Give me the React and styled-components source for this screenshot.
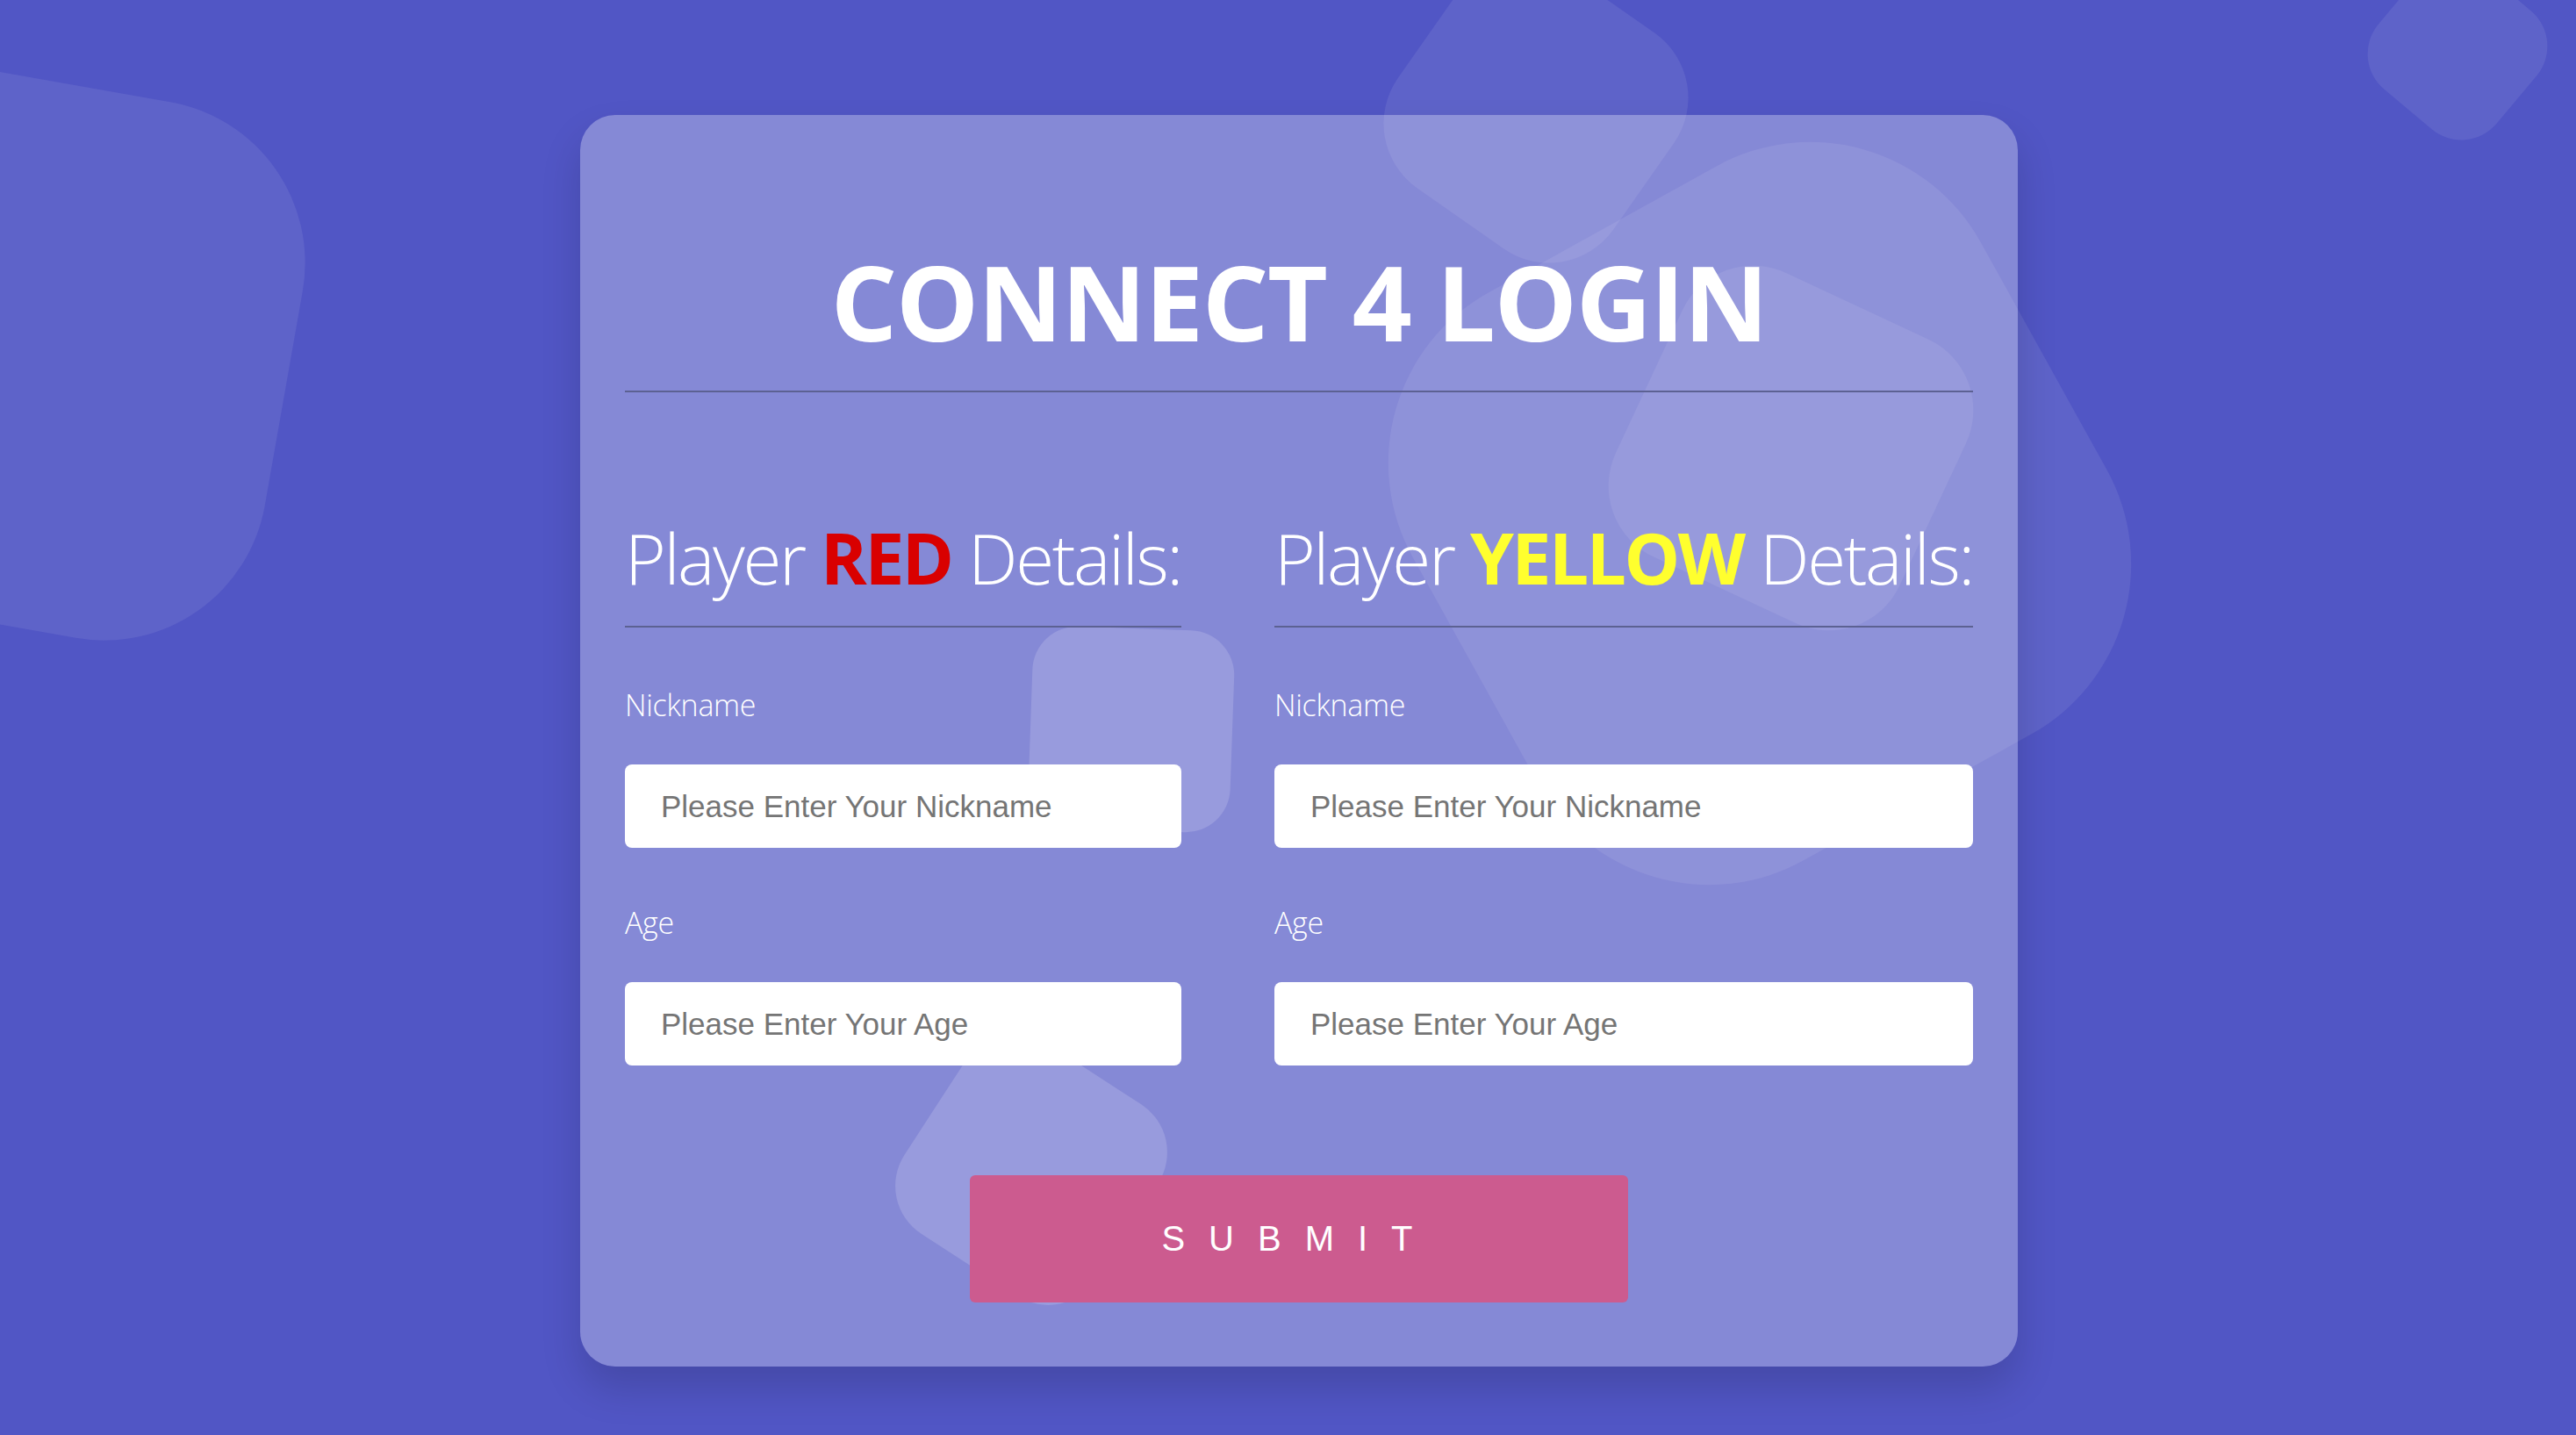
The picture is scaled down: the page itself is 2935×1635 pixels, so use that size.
import React from "react";
import styled, { createGlobalStyle } from "styled-components";

const GlobalStyle = createGlobalStyle`
  html, body {
    margin: 0;
    padding: 0;
    background: #5156c5;
  }

  * {
    box-sizing: border-box;
  }
`;

const Page = styled.div`
  position: relative;
  height: 100vh;
  overflow: hidden;
  display: flex;
  justify-content: center;
  align-items: flex-start;
  padding: 131px 0 0 25px;
  background: #5156c5;
`;

const Backdrop = styled.div`
  position: absolute;
  inset: 0;
  z-index: 0;
`;

const Shape = styled.span`
  position: absolute;
  left: ${(p) => p.x - p.size / 2}px;
  top: ${(p) => p.y - p.size / 2}px;
  width: ${(p) => p.size}px;
  height: ${(p) => p.size}px;
  border-radius: ${(p) => p.radius || 30}%;
  background: rgba(255, 255, 255, ${(p) => p.alpha || 0.08});
  transform: rotate(${(p) => p.rot}deg);
`;

const Card = styled.form`
  position: relative;
  z-index: 1;
  width: 1638px;
  padding: 153px 51px 73px;
  border-radius: 40px;
  background: rgba(255, 255, 255, 0.3);
  box-shadow: 0 25px 45px rgba(0, 0, 0, 0.15);
  font-family: "Open Sans", "Noto Sans", sans-serif;
  color: #fff;
`;

const Title = styled.h1`
  margin: 0;
  padding-bottom: 42px;
  border-bottom: 2px solid #5c6192;
  text-align: center;
  font-size: 119px;
  font-weight: 700;
  line-height: 1;
  letter-spacing: -1.5px;
`;

const Players = styled.div`
  display: flex;
  justify-content: space-between;
  margin-top: 148px;
`;

const Column = styled.div`
  display: flex;
  flex-direction: column;
`;

const Heading = styled.h2`
  margin: 0;
  padding-bottom: 38px;
  border-bottom: 2px solid #5c6192;
  font-size: 80px;
  font-weight: 300;
  line-height: 1;
  letter-spacing: -2.4px;
  white-space: nowrap;
`;

const Accent = styled.span`
  font-weight: 700;
  color: ${(p) => p.color};
`;

const Label = styled.label`
  display: block;
  margin-top: ${(p) => p.top}px;
  font-size: 34px;
  font-weight: 300;
  line-height: 1;
  letter-spacing: -0.3px;
`;

const Input = styled.input`
  display: block;
  width: 100%;
  height: 95px;
  margin-top: 51px;
  padding: 0 41px;
  border: none;
  border-radius: 8px;
  background: #fff;
  font-family: "Liberation Sans", Arial, sans-serif;
  font-size: 35px;
  color: #333;
  outline: none;

  &::placeholder {
    color: #757575;
  }
`;

const Submit = styled.button`
  display: block;
  width: 750px;
  height: 145px;
  margin: 125px auto 0;
  border: none;
  border-radius: 6px;
  background: #cc5b8f;
  color: #fff;
  font-family: "Liberation Sans", Arial, sans-serif;
  font-size: 40px;
  letter-spacing: 27px;
  cursor: pointer;
`;

const shapes = [
  { x: 18, y: 400, size: 620, rot: 10 },
  { x: 1750, y: 126, size: 300, rot: 35 },
  { x: 2005, y: 585, size: 740, rot: -29 },
  { x: 2040, y: 510, size: 357, rot: 25, radius: 25 },
  { x: 2800, y: 57, size: 176, rot: 40 },
  { x: 1289, y: 831, size: 230, rot: 2, radius: 22, alpha: 0.155 },
  { x: 1175, y: 1332, size: 260, rot: 33, radius: 25, alpha: 0.155 },
];

const players = [
  { name: "RED", color: "#d90000" },
  { name: "YELLOW", color: "#ffff2e" },
];

function PlayerForm({ name, color }) {
  return (
    <Column>
      <Heading>
        Player <Accent color={color}>{name}</Accent> Details:
      </Heading>
      <Label top={71}>Nickname</Label>
      <Input type="text" placeholder="Please Enter Your Nickname" />
      <Label top={68}>Age</Label>
      <Input type="number" placeholder="Please Enter Your Age" />
    </Column>
  );
}

export default function App() {
  return (
    <>
      <GlobalStyle />
      <Page>
        <Backdrop>
          {shapes.map((s, i) => (
            <Shape key={i} {...s} />
          ))}
        </Backdrop>
        <Card onSubmit={(e) => e.preventDefault()}>
          <Title>CONNECT 4 LOGIN</Title>
          <Players>
            {players.map((p) => (
              <PlayerForm key={p.name} {...p} />
            ))}
          </Players>
          <Submit type="submit">SUBMIT</Submit>
        </Card>
      </Page>
    </>
  );
}
